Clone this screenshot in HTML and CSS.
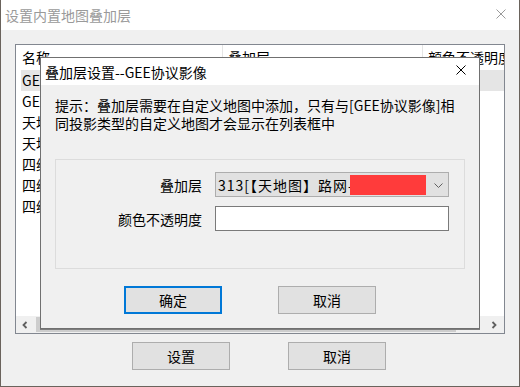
FILE: index.html
```html
<!DOCTYPE html>
<html lang="zh-CN">
<head>
<meta charset="utf-8">
<title>设置内置地图叠加层</title>
<link rel="stylesheet" href="styles.css">
</head>
<body>
<div class="win">
  <div class="titlebar">
    <span class="title">设置内置地图叠加层</span>
    <svg class="close-out" width="10" height="10" viewBox="0 0 10 10"><path d="M0.5 0.5L9.5 9.5M9.5 0.5L0.5 9.5" stroke="#9a9a9a" stroke-width="1" fill="none"/></svg>
  </div>
  <div class="content">
    <div class="list">
      <div class="lv-head">
        <div class="col c1">名称</div>
        <div class="col c2">叠加层</div>
        <div class="col c3">颜色不透明度</div>
      </div>
      <div class="lv-body">
        <div class="row sel"><span class="cell c1">GEE协议影像</span><span class="cell c2">天地图路网</span><span class="cell c3">100</span></div>
        <div class="row"><span class="cell c1">GEE协议地形</span><span class="cell c2"></span><span class="cell c3"></span></div>
        <div class="row"><span class="cell c1">天地图影像</span><span class="cell c2"></span><span class="cell c3"></span></div>
        <div class="row"><span class="cell c1">天地图地形</span><span class="cell c2"></span><span class="cell c3"></span></div>
        <div class="row"><span class="cell c1">四维影像</span><span class="cell c2"></span><span class="cell c3"></span></div>
        <div class="row"><span class="cell c1">四维地形</span><span class="cell c2"></span><span class="cell c3"></span></div>
        <div class="row"><span class="cell c1">四维路网</span><span class="cell c2"></span><span class="cell c3"></span></div>
      </div>
      <div class="hscroll">
        <div class="sb-btn"><svg width="6" height="8" viewBox="0 0 6 8"><path d="M4.5 1L1.5 4L4.5 7" stroke="#606060" stroke-width="1.8" fill="none"/></svg></div>
        <div class="sb-thumb"></div>
        <div class="sb-rest"><svg width="6" height="8" viewBox="0 0 6 8"><path d="M1.5 1L4.5 4L1.5 7" stroke="#606060" stroke-width="1.8" fill="none"/></svg></div>
      </div>
    </div>
    <div class="btns">
      <button class="btn">设置</button>
      <button class="btn">取消</button>
    </div>
  </div>

  <div class="dialog">
    <div class="dlg-title">
      <span class="dlg-caption">叠加层设置--GEE协议影像</span>
      <svg class="close-in" width="10" height="10" viewBox="0 0 10 10"><path d="M0.5 0.5L9.5 9.5M9.5 0.5L0.5 9.5" stroke="#000" stroke-width="1" fill="none"/></svg>
    </div>
    <div class="dlg-body">
      <p class="hint">提示：叠加层需要在自定义地图中添加，只有与[GEE协议影像]相<br>同投影类型的自定义地图才会显示在列表框中</p>
      <div class="group">
        <div class="field">
          <label class="lbl">叠加层</label>
          <div class="combo">
            <span class="combo-text">313[【天地图】路网-</span>
            <span class="redact"></span>
            <svg class="chev" width="9" height="5" viewBox="0 0 9 5"><path d="M0.5 0.5L4.5 4.5L8.5 0.5" stroke="#606060" stroke-width="1" fill="none"/></svg>
          </div>
        </div>
        <div class="field">
          <label class="lbl">颜色不透明度</label>
          <div class="textbox"></div>
        </div>
      </div>
      <div class="dlg-btns">
        <button class="btn btn-default">确定</button>
        <button class="btn">取消</button>
      </div>
    </div>
  </div>
</div>
</body>
</html>
```
FILE: styles.css
```css
* { box-sizing: border-box; margin: 0; padding: 0; }
html, body { width: 520px; height: 387px; overflow: hidden; }
body {
  background: #6a635c;
  font-family: "Noto Sans CJK SC", "Noto Sans", sans-serif;
  font-size: 14px;
  color: #000;
}
.win {
  position: relative;
  margin-left: 1px;
  width: 518px;
  height: 386px;
  background: #f0f0f0;
  display: flex;
  flex-direction: column;
}
.titlebar {
  height: 30px;
  background: #fff;
  display: flex;
  align-items: center;
  padding-left: 4px;
}
.title { flex: 1; color: #9a9a9a; line-height: 20px; }
.close-out { margin-right: 13px; margin-bottom: 2px; }

.content { flex: 1; display: flex; flex-direction: column; padding: 14px 0 0 14px; }
.list {
  width: 490px;
  height: 290px;
  border: 1px solid #828790;
  background: #fff;
  display: flex;
  flex-direction: column;
  overflow: hidden;
}
.lv-head { display: flex; height: 25px; line-height: 25px; flex: none; }
.col { white-space: nowrap; overflow: hidden; border-right: 1px solid #e5e5e5; }
.lv-head .c1 { width: 207px; padding-left: 6px; }
.lv-head .c2 { width: 200px; padding-left: 5px; }
.lv-head .c3 { flex: 1; padding-left: 5px; border-right: none; }
.lv-body { flex: 1; overflow: hidden; }
.row { display: flex; height: 21px; line-height: 21px; margin-left: 5px; white-space: nowrap; }
.row.sel { background: #e5e5e5; }
.cell { overflow: hidden; }
.row .c1 { width: 202px; padding-left: 1px; }
.row .c2 { width: 200px; padding-left: 5px; }
.row .c3 { flex: 1; padding-left: 5px; }
.hscroll { height: 17px; flex: none; display: flex; background: #f0f0f0; }
.sb-btn { width: 20px; display: flex; align-items: center; justify-content: center; padding-right: 3px; }
.sb-thumb { width: 420px; margin: 1px 0; background: #cdcdcd; }
.sb-rest { flex: 1; display: flex; align-items: center; justify-content: flex-end; padding-right: 7px; }

.btns { display: flex; gap: 58px; padding-left: 117px; margin-top: 8px; }
.btn {
  width: 98px;
  height: 28px;
  background: #e1e1e1;
  border: 1px solid #adadad;
  font-family: inherit;
  font-size: 14px;
  color: #000;
  line-height: 20px;
}
.btn-default { border: 2px solid #0078d7; }

.dialog {
  position: absolute;
  left: 39px;
  top: 57px;
  width: 440px;
  height: 272px;
  border: 1px solid #707070;
  box-shadow: 0 1px 0 #7d7d7d;
  background: #f0f0f0;
  display: flex;
  flex-direction: column;
}
.dlg-title {
  height: 27px;
  background: #fff;
  display: flex;
  align-items: center;
  padding-left: 4px;
  flex: none;
}
.dlg-caption { flex: 1; line-height: 20px; }
.close-in { margin-right: 13px; margin-bottom: 3px; }
.dlg-body { padding: 11px 14px 0 14px; }
.hint { line-height: 18px; white-space: nowrap; }
.group {
  margin-top: 27px;
  height: 110px;
  border: 1px solid #dcdcdc;
  padding-top: 12px;
  display: flex;
  flex-direction: column;
  gap: 9px;
}
.field { display: flex; align-items: center; }
.lbl { width: 146px; text-align: right; margin-right: 13px; line-height: 20px; }
.combo {
  position: relative;
  width: 234px;
  height: 25px;
  border: 1px solid #adadad;
  background: #e1e1e1;
  display: flex;
  align-items: center;
  padding-left: 2px;
}
.combo-text { flex: 1; white-space: nowrap; line-height: 20px; letter-spacing: 1px; margin-right: 3px; }
.redact { position: absolute; left: 134px; top: 2px; width: 76px; height: 20px; background: #ff3b3b; }
.chev { margin-right: 5px; margin-top: 1px; }
.textbox { width: 234px; height: 25px; border: 1px solid #7a7a7a; background: #fff; }
.dlg-btns { display: flex; gap: 56px; padding-left: 69px; margin-top: 17px; }
```
